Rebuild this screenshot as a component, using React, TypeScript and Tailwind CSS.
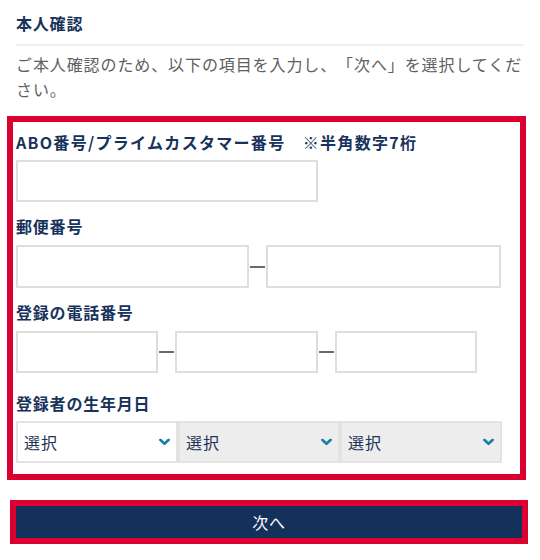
import React from "react";

const Chevron = () => (
  <svg width="11" height="7" viewBox="0 0 11 7" className="pointer-events-none absolute right-[8px] top-1/2 -translate-y-1/2">
    <polyline points="1.3,1.3 5.5,5.3 9.7,1.3" fill="none" stroke="#1a7fa6" strokeWidth="2.6" strokeLinecap="round" strokeLinejoin="round" />
  </svg>
);

const Dash = () => (
  <div className="flex w-[17px] shrink-0 items-center justify-center">
    <div className="h-[2px] w-[15px] bg-[#6a6a6a]" />
  </div>
);

const inputCls =
  "block h-full border-2 border-[#dedede] bg-white outline-none";

const Sel = ({ gray }: { gray?: boolean }) => (
  <div className="relative h-[42px] w-[162px] shrink-0">
    <select
      className={
        "h-full w-full appearance-none border-2 border-[#e3e3e3] pl-[6px] text-[16px] tracking-[1px] text-[#1e3557] outline-none " +
        (gray ? "bg-[#ededed]" : "bg-white")
      }
      defaultValue="sel"
    >
      <option value="sel">選択</option>
    </select>
    <Chevron />
  </div>
);

export default function App() {
  return (
    <div className="h-[560px] w-[540px] bg-white [font-family:'Noto_Sans_CJK_JP',sans-serif] [text-spacing-trim:space-all]">
      <div className="px-[16px] pt-[11px]">
        <h1 className="text-[16px] font-bold leading-[24px] tracking-[0.8px] text-[#17325b]">本人確認</h1>
        <div className="mt-[9px] h-[2px] w-[508px] bg-[#f0f0f0]" />
        <p className="mt-[6px] w-[508px] text-[16px] leading-[25px] tracking-[0.9px] text-[#606060] [text-spacing-trim:space-all]">
          ご本人確認のため、以下の項目を入力し、「次へ」を選択してください。
        </p>
      </div>

      <div className="ml-[7px] mt-[14px] w-[519px] border-[6px] border-[#dc0030] pb-[11px] pl-[3px] pt-[8px]">
        <div className="text-[16px] font-bold leading-[24px] tracking-[1.3px] text-[#17325b]">
          ABO番号/プライムカスタマー番号　※半角数字7桁
        </div>
        <div className="mt-[6px] h-[42px] w-[302px]">
          <input type="text" className={inputCls + " w-full"} />
        </div>

        <div className="mt-[12px] text-[16px] font-bold leading-[24px] tracking-[0.8px] text-[#17325b]">郵便番号</div>
        <div className="mt-[7px] flex h-[43px]">
          <input type="text" className={inputCls + " w-[233px]"} />
          <Dash />
          <input type="text" className={inputCls + " w-[235px]"} />
        </div>

        <div className="mt-[12px] text-[16px] font-bold leading-[24px] tracking-[0.8px] text-[#17325b]">登録の電話番号</div>
        <div className="mt-[7px] flex h-[42px]">
          <input type="text" className={inputCls + " w-[142px]"} />
          <Dash />
          <input type="text" className={inputCls + " w-[143px]"} />
          <Dash />
          <input type="text" className={inputCls + " w-[142px]"} />
        </div>

        <div className="mt-[18px] text-[16px] font-bold leading-[24px] tracking-[0.8px] text-[#17325b]">登録者の生年月日</div>
        <div className="mt-[6px] flex">
          <Sel />
          <Sel gray />
          <Sel gray />
        </div>
      </div>

      <button
        type="button"
        className="ml-[10px] mt-[20px] flex h-[44px] w-[518px] items-center justify-center border-[6px] border-[#dc0030] bg-[#13315a] text-[16px] leading-[24px] tracking-[0.8px] text-white"
      >
        次へ
      </button>
    </div>
  );
}
